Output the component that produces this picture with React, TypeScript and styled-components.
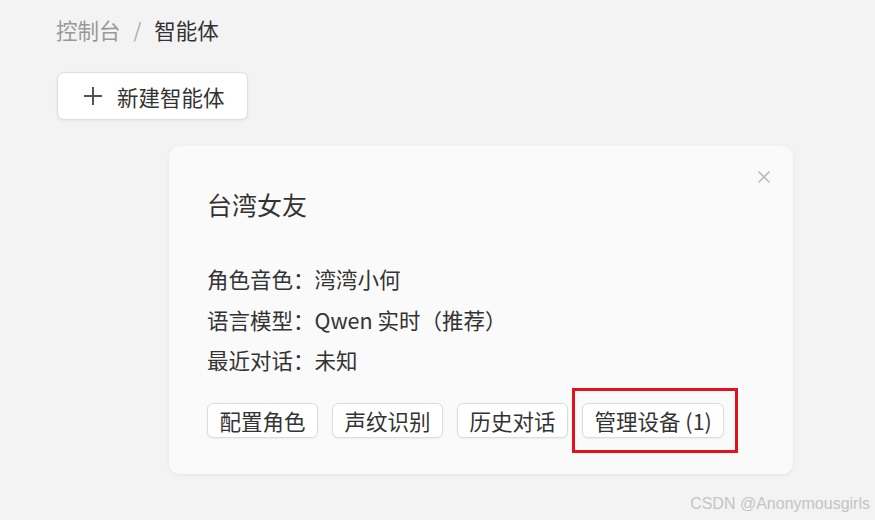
import React from "react";
import styled, { createGlobalStyle } from "styled-components";

const Global = createGlobalStyle`
  html, body { margin: 0; padding: 0; background: #f3f3f3; }
  body { font-family: "Noto Sans CJK SC", "Microsoft YaHei", sans-serif; color: #333; }
  * { box-sizing: border-box; }
`;

const Page = styled.div`
  position: relative;
  width: 875px;
  height: 520px;
  padding: 15px 0 0 56px;
  background: #f3f3f3;
  overflow: hidden;
`;

const Breadcrumb = styled.nav`
  display: flex;
  align-items: center;
  height: 30px;
  font-size: 21.5px;
  line-height: 30px;
`;

const Crumb = styled.span<{ $current?: boolean }>`
  color: ${(p) => (p.$current ? "#333" : "#999")};
`;

const Sep = styled.span`
  color: #aaa;
  margin: 0 13px;
  font-size: 20px;
`;

const NewButton = styled.button`
  margin: 27px 0 0 1px;
  display: flex;
  align-items: center;
  gap: 14px;
  width: 191px;
  height: 48px;
  padding: 0 0 0 25px;
  background: #fff;
  border: 1px solid #dedede;
  border-radius: 7px;
  box-shadow: 0 1px 3px rgba(0, 0, 0, 0.06);
  font-family: inherit;
  font-size: 21.5px;
  color: #333;
  cursor: pointer;
`;

const Card = styled.section`
  position: relative;
  margin: 26px 0 0 113px;
  width: 624px;
  height: 328px;
  padding: 40px 38px 0 38px;
  background: #fafafa;
  border-radius: 11px;
  box-shadow: 0 1px 4px rgba(0, 0, 0, 0.06);
`;

const Close = styled.button`
  position: absolute;
  top: 24px;
  right: 22px;
  width: 14px;
  height: 14px;
  padding: 0;
  border: 0;
  background: none;
  display: flex;
  cursor: pointer;
`;

const Title = styled.h2`
  margin: 0;
  font-size: 25px;
  font-weight: 400;
  line-height: 36px;
  color: #333;
`;

const InfoList = styled.div`
  margin-top: 37px;
  display: flex;
  flex-direction: column;
`;

const InfoRow = styled.div`
  height: 40.5px;
  line-height: 40px;
  font-size: 21.5px;
  color: #333;
`;

const Actions = styled.div`
  margin-top: 22px;
  display: flex;
  gap: 14px;
`;

const ActionWrap = styled.span`
  position: relative;
  display: inline-flex;
`;

const ActionButton = styled.button`
  height: 35px;
  padding: 0 11.5px;
  background: #fff;
  border: 1px solid #dcdcdc;
  border-radius: 6px;
  box-shadow: 0 1px 2px rgba(0, 0, 0, 0.05);
  font-family: inherit;
  font-size: 21.5px;
  line-height: 33px;
  color: #333;
  cursor: pointer;
`;

const Highlight = styled.span`
  position: absolute;
  top: -15px;
  bottom: -15px;
  left: -10px;
  right: -14px;
  border: 3.5px solid #e3101e;
  pointer-events: none;
`;

const Watermark = styled.div`
  position: absolute;
  right: 5px;
  bottom: 7px;
  font-family: "Liberation Sans", Arial, sans-serif;
  font-size: 16px;
  color: #c4c4c4;
`;

const PlusIcon = () => (
  <svg width="20" height="20" viewBox="0 0 20 20">
    <path d="M10 1v18M1 10h18" stroke="#555" strokeWidth="2" />
  </svg>
);

const CloseIcon = () => (
  <svg width="14" height="14" viewBox="0 0 14 14">
    <path d="M1.5 1.5l11 11M12.5 1.5l-11 11" stroke="#bdbdbd" strokeWidth="1.6" />
  </svg>
);

const actions = ["配置角色", "声纹识别", "历史对话"];

export default function App() {
  return (
    <>
      <Global />
      <Page>
        <Breadcrumb>
          <Crumb>控制台</Crumb>
          <Sep>/</Sep>
          <Crumb $current>智能体</Crumb>
        </Breadcrumb>
        <NewButton>
          <PlusIcon />
          新建智能体
        </NewButton>
        <Card>
          <Close aria-label="close">
            <CloseIcon />
          </Close>
          <Title>台湾女友</Title>
          <InfoList>
            <InfoRow>角色音色：湾湾小何</InfoRow>
            <InfoRow>语言模型：Qwen 实时（推荐）</InfoRow>
            <InfoRow>最近对话：未知</InfoRow>
          </InfoList>
          <Actions>
            {actions.map((a) => (
              <ActionButton key={a}>{a}</ActionButton>
            ))}
            <ActionWrap>
              <ActionButton>管理设备 (1)</ActionButton>
              <Highlight />
            </ActionWrap>
          </Actions>
        </Card>
        <Watermark>CSDN @Anonymousgirls</Watermark>
      </Page>
    </>
  );
}
